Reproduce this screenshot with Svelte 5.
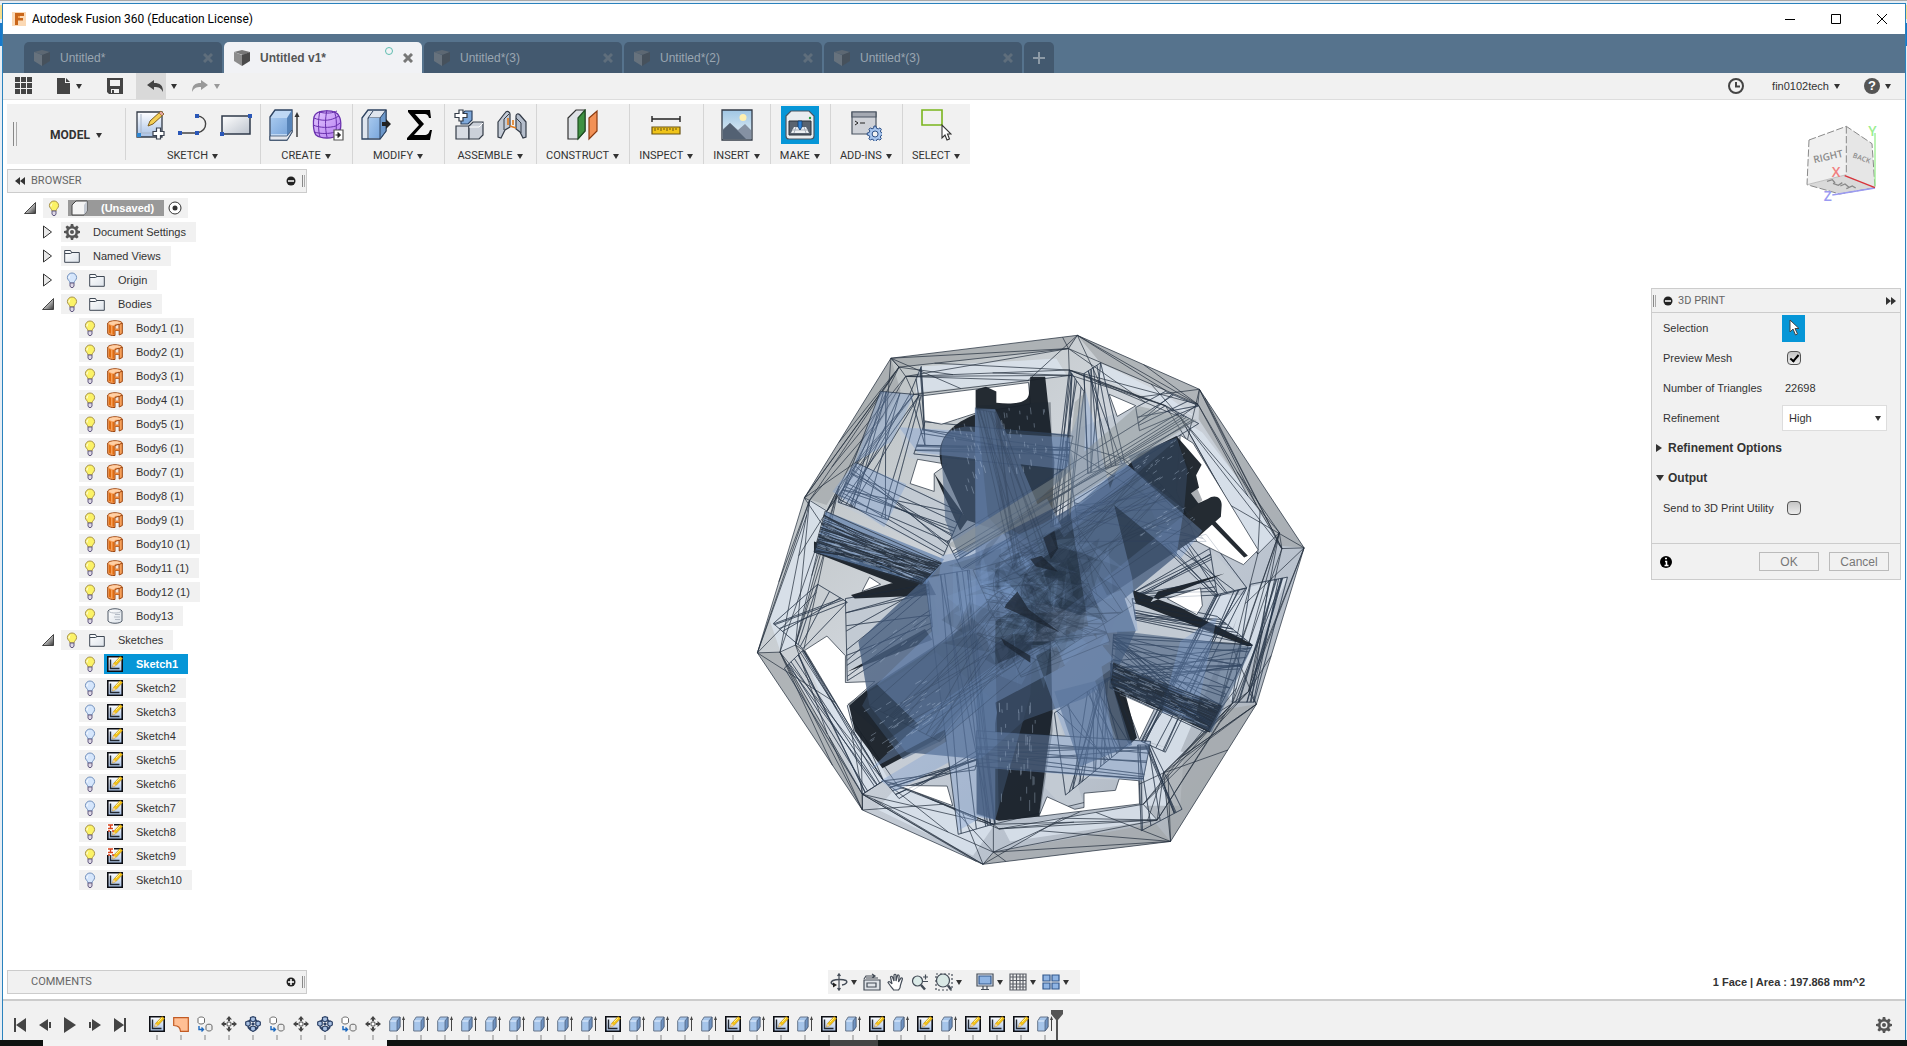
<script>
	const tabs = [
		{ name: 'Untitled*' },
		{ name: 'Untitled v1*', active: true },
		{ name: 'Untitled*(3)' },
		{ name: 'Untitled*(2)' },
		{ name: 'Untitled*(3)' }
	];

	const groups = [
		{ name: 'SKETCH', icons: ['newsketch', 'line', 'rect'] },
		{ name: 'CREATE', icons: ['box', 'form'] },
		{ name: 'MODIFY', icons: ['press', 'sigma'] },
		{ name: 'ASSEMBLE', icons: ['component', 'joint'] },
		{ name: 'CONSTRUCT', icons: ['plane'] },
		{ name: 'INSPECT', icons: ['measure'] },
		{ name: 'INSERT', icons: ['image'] },
		{ name: 'MAKE', icons: ['print'] },
		{ name: 'ADD-INS', icons: ['script'] },
		{ name: 'SELECT', icons: ['select'] }
	];

	const bodies = Array.from({ length: 12 }, (_, i) => ({
		name: `Body${i + 1} (1)`,
		level: 2,
		bulb: 'on',
		icon: 'surface'
	}));

	const sketches = Array.from({ length: 10 }, (_, i) => ({
		name: `Sketch${i + 1}`,
		level: 2,
		bulb: [0, 7, 8].includes(i) ? 'on' : 'off',
		icon: i === 7 || i === 8 ? 'pinned' : 'sketch',
		selected: i === 0
	}));

	const tree = [
		{ name: 'Document Settings', level: 1, arrow: 'closed', icon: 'gear' },
		{ name: 'Named Views', level: 1, arrow: 'closed', icon: 'folder' },
		{ name: 'Origin', level: 1, arrow: 'closed', bulb: 'off', icon: 'folder' },
		{ name: 'Bodies', level: 1, arrow: 'open', bulb: 'on', icon: 'folder' },
		...bodies,
		{ name: 'Body13', level: 2, bulb: 'on', icon: 'solid' },
		{ name: 'Sketches', level: 1, arrow: 'open', bulb: 'on', icon: 'folder' },
		...sketches
	];

	const featureNames = { S: 'sketch', P: 'patch', C: 'copy', M: 'move', R: 'pattern', E: 'extrude' };
	const timeline = [...'SPCMRCMRCMEEEEEEEEESEEEESESESESESESSSE'].map((key) => featureNames[key]);

	const playback = ['first', 'prev', 'play', 'next', 'last'];

	let previewMesh = $state(true);
	let sendToUtility = $state(false);
	let refinement = $state('High');

	// frame rings of the previewed mesh, outermost first
	const rings = [
		[[408, 107], [912, 43], [1242, 194], [1525, 638], [1396, 1076], [1164, 1460], [657, 1524], [331, 1372], [47, 932], [174, 498]],
		[[430, 132], [888, 80], [1238, 236], [1465, 640], [1375, 1040], [1145, 1268], [685, 1490], [331, 1328], [108, 930], [188, 505]],
		[[448, 158], [890, 140], [1190, 272], [1458, 595], [1330, 1075], [1128, 1400], [685, 1412], [388, 1290], [150, 910], [235, 535]],
		[[470, 208], [895, 155], [1150, 240], [1400, 655], [1290, 1100], [1090, 1356], [700, 1425], [424, 1300], [172, 925], [268, 465]]
	];

	let seed = 7;
	const rand = () => {
		seed = (seed * 16807) % 2147483647;
		return seed / 2147483647;
	};

	const mix = (a, b, t) => [Math.round(a[0] + (b[0] - a[0]) * t), Math.round(a[1] + (b[1] - a[1]) * t)];
	const seg = (a, b) => `M${a[0]} ${a[1]}L${b[0]} ${b[1]}`;

	const buildFrame = () => {
		let d = '';
		for (let i = 0; i < 10; i++) {
			const j = (i + 1) % 10;
			for (let r = 0; r < rings.length; r++) {
				d += seg(rings[r][i], rings[r][j]);
				if (r === 0) continue;
				const [a, b, c, e] = [rings[r - 1][i], rings[r - 1][j], rings[r][i], rings[r][j]];
				d += seg(a, c) + seg(r % 2 ? a : c, r % 2 ? e : b);
				d += seg(a, mix(c, e, rand())) + seg(e, mix(a, b, rand()));
			}
			d += seg(rings[0][i], mix(rings[3][i], rings[3][j], 0.2 + rand() * 0.3));
			d += seg(rings[0][j], mix(rings[3][i], rings[3][j], 0.5 + rand() * 0.3));
		}
		return d;
	};

	// lines running from side a-b to side c-d
	const hatch = ([a, b, c, d, count]) => {
		let path = seg(a, c) + seg(b, d) + seg(a, b) + seg(c, d);
		for (let k = 0; k < count; k++) {
			path += seg(mix(a, b, rand()), mix(c, d, rand()));
		}
		return path;
	};

	// short bright dashes along the same direction
	const sparkle = ([a, b, c, d, count]) => {
		let path = '';
		for (let k = 0; k < count; k++) {
			const t = rand();
			const from = rand() * 0.9;
			path += seg(mix(mix(a, b, t), mix(c, d, t), from), mix(mix(a, b, t), mix(c, d, t), from + 0.03 + rand() * 0.07));
		}
		return path;
	};

	const buildShards = (count, size) =>
		Array.from({ length: count }, (_, i) => {
			const angle = rand() * Math.PI * 2;
			const radius = rand() * 190;
			const x = 790 + Math.cos(angle) * radius;
			const y = 790 + Math.sin(angle) * radius;
			const points = [0, 1, 2].map(() => `${Math.round(x + (rand() - 0.5) * size)},${Math.round(y + (rand() - 0.5) * size)}`);
			return { points: points.join(' '), light: i % 2 === 0 };
		});

	const frame = buildFrame();

	const struts = [
		[[1010, 880], [1000, 1030], [1385, 910], [1260, 1155], 34],
		[[500, 285], [470, 375], [900, 325], [880, 420], 8],
		[[640, 1150], [640, 1250], [1110, 1180], [1090, 1285], 10],
		[[315, 400], [265, 500], [600, 540], [550, 660], 10],
		[[1285, 770], [1370, 750], [1085, 1180], [1150, 1210], 8],
		[[1150, 200], [1240, 240], [1070, 245], [1080, 310], 4],
		[[890, 140], [930, 200], [840, 580], [890, 560], 7],
		[[930, 150], [975, 120], [940, 430], [1040, 400], 8],
		[[560, 620], [600, 700], [1150, 240], [1240, 290], 7],
		[[500, 720], [620, 700], [590, 1440], [690, 1410], 8],
		[[1060, 780], [1070, 840], [1290, 830], [1385, 910], 8],
		[[1070, 760], [1080, 780], [1270, 640], [1290, 770], 7],
		[[285, 780], [290, 1010], [510, 740], [520, 860], 9],
		[[850, 1100], [1000, 1000], [880, 1330], [1070, 1170], 18],
		[[380, 200], [490, 210], [265, 510], [400, 560], 10],
		[[490, 130], [460, 205], [495, 210], [500, 350], 3],
		[[880, 340], [920, 620], [1040, 390], [1260, 620], 8],
		[[1140, 630], [1260, 600], [1285, 775], [1370, 750], 6],
		[[210, 740], [290, 790], [90, 850], [170, 920], 6],
		[[170, 925], [120, 975], [388, 1290], [331, 1328], 7],
		[[1380, 740], [1480, 720], [1330, 1070], [1390, 1070], 8],
		[[1075, 1190], [1110, 1190], [1085, 1430], [1195, 1370], 7],
		[[635, 1260], [650, 1200], [390, 1290], [430, 1340], 6]
	].map(hatch);

	const darkStruts = [
		[[230, 535], [200, 650], [545, 680], [490, 740], 46],
		[[1010, 960], [1005, 1020], [1300, 1080], [1265, 1150], 40]
	].map(hatch);

	const glints = [
		[[560, 290], [620, 260], [620, 500], [680, 480], 26],
		[[700, 240], [830, 240], [730, 440], [840, 430], 34],
		[[700, 1060], [800, 1060], [705, 1390], [800, 1390], 40],
		[[1240, 410], [1180, 330], [1120, 500], [1040, 420], 34],
		[[1240, 560], [1200, 500], [1100, 640], [1050, 580], 20],
		[[310, 1110], [380, 1230], [520, 980], [600, 1080], 50],
		[[1010, 960], [1000, 1040], [1300, 1080], [1270, 1150], 90],
		[[220, 560], [200, 640], [540, 680], [490, 740], 90],
		[[530, 780], [530, 850], [320, 940], [420, 980], 16]
	].map(sparkle);

	const core = [
		[[630, 700], [760, 1000], [900, 620], [1000, 900], 20],
		[[640, 880], [900, 560], [820, 960], [1060, 800], 14],
		[[350, 1080], [540, 1180], [700, 760], [860, 900], 18],
		[[700, 660], [860, 820], [1080, 400], [1230, 560], 20],
		[[640, 250], [700, 260], [740, 700], [830, 640], 12]
	].map(hatch);

	const shards = buildShards(110, 190);
</script>

{#snippet cube(shade)}
	<svg class="cube" class:dim={shade} width="18" height="18" viewBox="0 0 18 18">
		<path d="M1 3 9 1l8 2-7 3z" fill="#777" />
		<path d="M1 3l8 3v11l-8-5z" fill="#8c8c8c" />
		<path d="M9 6l8-3v9l-8 5z" fill="#4a4a4a" />
	</svg>
{/snippet}

{#snippet bulb(state)}
	<svg width="12" height="16" viewBox="0 0 12 16">
		<path
			d="M6 1a4.6 4.6 0 0 0-4.6 4.6C1.400 8 3.700 8.600 4 11h4c.3-2.400 2.600-3 2.600-5.400A4.600 4.600 0 0 0 6 1z"
			fill={state === 'on' ? '#fbf266' : '#d5e6fc'}
			stroke={state === 'on' ? '#a8934a' : '#7391bd'}
		/>
		<path d="M4 3.500a3 3 0 0 0-1 3" stroke="#fff" fill="none" />
		<path d="M4 11v3l1 1.500h2L8 14v-3z" fill="#ded8e6" stroke="#625a80" />
	</svg>
{/snippet}

{#snippet small(name)}
	<svg width="16" height="16" viewBox="0 0 16 16">
		{#if name === 'gear'}
			<path
				d="M6.800 0h2.400l.5 2.300 1.300.6 2-1.300 1.700 1.700-1.300 2 .5 1.300 2.100.5v2l-2.200.6-.5 1.300 1.300 2-1.700 1.600-2-1.200-1.300.5L9.100 16H6.900l-.5-2.200-1.300-.5-2 1.300-1.700-1.700 1.300-2-.5-1.300L0 9.100V6.900l2.300-.5.5-1.300-1.300-2 1.700-1.600 2 1.300 1.200-.5z"
				fill="#555"
			/>
			<circle cx="8" cy="8" r="3.500" fill="#f1f1f1" />
			<circle cx="8" cy="8" r="2" fill="#555" />
		{:else if name === 'folder'}
			<path d="M.7 14.300V2.500h5.800l1 2h7.800v9.800z" fill="url(#tint)" stroke="#3f4854" />
			<path d="M1 5.500h5.500l1.500-1" stroke="#3f4854" fill="none" />
		{:else if name === 'surface'}
			<path d="M.7 3C2.500 0 13.500 0 15.300 3v10.500L12.200 15v-4.500H8v5C5 15.800 2 15 .7 13.500z" fill="#f7a05a" stroke="#9c4510" />
			<path d="M2 4.800v8l2 1V5.800zM5.500 6v8.500h1.500V6z" fill="#e06d12" />
			<path d="M1.500 3C4 .8 12 .8 14.500 3L12 4C9 3.200 7 4 7.500 5.300 5 5.300 2.500 4.500 1.500 3z" fill="#ffd0a6" />
			<path d="M8 10.500V5.500l4-1.300v6.300z" fill="#f4e4d8" stroke="#9c4510" />
			<path d="M8 8.500h4v2H8z" fill="#ef8a3d" />
			<path d="M12.200 4.500l3-1.500" stroke="#9c4510" />
		{:else if name === 'solid'}
			<path d="M1 3v10c2 3 12 3 14 0V3C13 0 3 0 1 3z" fill="url(#tint)" stroke="#4f5966" />
			<path d="M2 3.500c2 2 10 2 12 0M8 6.500h5M7 9h6M8 11.500h5" stroke="#b5bcc6" fill="none" />
		{:else if name === 'sketch' || name === 'pinned'}
			<path d="M.8.8h14.400v14.400H.800z" fill="url(#sheet)" stroke="#0c0e14" stroke-width="1.600" />
			<path d="M3.500 3.500v9h9" stroke="#222831" stroke-width="1.400" fill="none" />
			<path d="M5.500 11l1-3.500L13 .6l2.600 2L9 9.500z" fill="#f5c518" stroke="#a87a10" stroke-width=".5" />
			<path d="M5.500 11l1-3.500L9 9.500z" fill="#f2d2a2" />
			<path d="M9 6l4-4" stroke="#fff28a" />
			{#if name === 'pinned'}
				<path d="M0 0h7v7H0z" fill="#fff" />
				<path d="M1 1h5M3.500 1v3M1 4.500h5M1 7h2M5 7h2" stroke="#d8431c" stroke-width="1.400" />
			{/if}
		{:else if name === 'patch'}
			<path d="M.7 1.700h14.600v13.600H7.500C7 11 5.500 10 .7 9.500z" fill="#ffbf94" stroke="#c25a22" stroke-width="1.200" />
		{:else if name === 'copy'}
			<path d="M1 2.500C2 .5 6.500.5 7.500 2.500v4C6 8.500 2 8.500 1 6.500z" fill="#fff" stroke="#666" />
			<path d="M9 9.500c1-1.800 5-1.800 6 0v4c-1 2-5 2-6 0z" fill="#eee" stroke="#666" />
			<path d="M2 10v3.500h4M4.500 11.500l2 2-2 2" stroke="#1b67bd" stroke-width="1.400" fill="none" />
		{:else if name === 'move'}
			<path d="M8 0l3 3.500H5zM8 16l3-3.500H5zM0 8l3.500-3v6zM16 8l-3.500-3v6z" fill="#444" />
			<path d="M8 2v3M8 11v3M2 8h3M11 8h3" stroke="#444" stroke-width="2" />
			<rect x="6" y="6" width="4" height="4" rx="1" fill="#fff" stroke="#444" />
		{:else if name === 'pattern'}
			<path d="M3 11l3 3M13 11l-3 3M3.500 6L6 3.500M12.500 6L10 3.500" stroke="#2c4166" stroke-width="2" />
			<g fill="#a8c0e2" stroke="#2c4166" stroke-width="1.200">
				<path d="M5.500 1.500 8 .7l2.500.8v3L8 6 5.500 4.500zM.7 6l2.500-1 2 1v3l-2 1.500L.7 9zM10.800 6l2.500-1 2 1v3l-2.500 1.500-2-1.500zM5.500 11 8 10l2.500 1v3L8 15.500 5.500 14z" />
			</g>
			<path d="M6.500 7h3v2h-3z" fill="#2c4166" />
		{:else if name === 'extrude'}
			<path d="M.7 5l2.500-4H11v10l-3 4H.7z" fill="#a6c5ea" stroke="#66758a" />
			<path d="M8 15V5l3-4v10z" fill="#6f93c2" stroke="#4b5d77" stroke-width=".7" />
			<path d="M1.300 5h6" stroke="#e8f2ff" />
			<path d="M14.500 15V3" stroke="#444" />
			<path d="M14.500 0l1.500 4h-3z" fill="#444" />
		{/if}
	</svg>
{/snippet}

{#snippet tool(name)}
	<svg width="32" height="32" viewBox="0 0 32 32">
		{#if name === 'newsketch'}
			<path d="M3 3h25v25H3z" fill="url(#sheet)" stroke="#333b47" stroke-width="1.300" />
			<path d="M3 24h4v4H3z" fill="#2e86d1" />
			<path d="M7 5v19h18" stroke="#a9b6c8" fill="none" />
			<path d="M14 17l2-5L27 2l3 3-11 10z" fill="#f4cf55" stroke="#7e5d1c" />
			<path d="M25 4l3 3 2-2-3-3z" fill="#e3a5a0" stroke="#7e5d1c" stroke-width=".6" />
			<path d="M22.500 19h4v3.500H30v4h-3.500V30h-4v-3.500H19v-4h3.500z" fill="#fff" stroke="#3a4250" stroke-width="1.200" />
		{:else if name === 'line'}
			<path d="M3 24h17c12-2 11-17 0-17" fill="none" stroke="#444" stroke-width="1.400" />
			<path d="M1 22h4v4H1zM18 22h4v4h-4zM18 5h4v4h-4z" fill="#2a57b8" />
		{:else if name === 'rect'}
			<path d="M2 7h28v18H2z" fill="url(#paper)" stroke="#2f3a4a" stroke-width="1.500" />
			<path d="M0 23h4v4H0zM28 5h4v4h-4z" fill="#2a57b8" />
		{:else if name === 'box'}
			<path d="M1 8l5-7h17v22l-5 8H1z" fill="#bfd8f4" stroke="#2d4260" stroke-width="1.300" />
			<path d="M2 9h16v16H2z" fill="url(#blue)" />
			<path d="M18 9l5-8v22l-5 8z" fill="#5683b8" />
			<path d="M1 27h17l5-6v2l-5 8H1z" fill="#e3e7ee" stroke="#2d4260" stroke-width=".7" />
			<path d="M28 28V7" stroke="#333" stroke-width="1.400" />
			<path d="M28 3l2.500 5h-5z" fill="#333" />
		{:else if name === 'form'}
			<path d="M2 8c2-8 22-8 25-1 3 5 2 16-1 19-5 4-17 4-22 0C1 22 1 13 2 8z" fill="url(#violet)" stroke="#6a31ae" stroke-width="1.300" />
			<path d="M2 9c7 3 15 3 21 0l4-2M1 16c7 3 16 3 23 1l4-3M2 23c7 2 15 2 21 0l5-3M8 2c-2 8-2 19 0 26M15 1c-2 8-2 19 0 27M22 2c3 6 3 18 1 25M7 3c8 2 14 1 18-1" fill="none" stroke="#6a31ae" />
			<path d="M22 21h9v10h-9z" fill="#fff" stroke="#555" stroke-width="1.200" />
			<path d="M23.500 26h3M26 23.500l2.500 2.500-2.500 2.500z" fill="#222" stroke="#222" />
		{:else if name === 'press'}
			<path d="M1 9l6-8h18v21l-6 8H1z" fill="#dfe5ee" stroke="#2d4260" stroke-width="1.300" />
			<path d="M7 9l5-7M7 30V9h12" stroke="#2d4260" fill="none" />
			<path d="M8 9h11v20H8z" fill="url(#blue)" />
			<path d="M19 9l6-8v21l-6 8z" fill="#6b97ca" stroke="#2d4260" />
			<path d="M21 13h4v-3l5 5-5 5v-3h-4z" fill="#222" />
		{:else if name === 'sigma'}
			<path d="M4 1h22l1 8h-2c-1-4-3-4-6-4h-8l9 10-10 11h10c4 0 5-2 6-5h2l-2 10H3v-2l12-13L4 3z" fill="#000" />
		{:else if name === 'component'}
			<path d="M8 15V6l4-4h7v9l-4 4z" fill="#7ea8da" stroke="#2d4260" stroke-width="1.200" />
			<path d="M3 17h13v13H3z" fill="#d8dce3" stroke="#333b47" stroke-width="1.200" />
			<path d="M16 17l4-4h10v13l-4 4H16z" fill="#cbd0d9" stroke="#333b47" stroke-width="1.200" />
			<path d="M16 18h10l4-4" fill="none" stroke="#fff" />
			<path d="M6 1h4v3.500h4v4h-4V12H6V8.500H2v-4h4z" fill="#fff" stroke="#333b47" stroke-width="1.200" />
		{:else if name === 'joint'}
			<path d="M2 13L9 4c2-3 5-1 5 1v13l-5 3-4 8-3-1z" fill="#c4cbd6" stroke="#333b47" stroke-width="1.200" />
			<path d="M8 21V10l5-5" fill="none" stroke="#333b47" />
			<path d="M30 13L24 6c-2-2-4-1-4 1v13l4 3 3 6 3-1z" fill="#b4bdcb" stroke="#333b47" stroke-width="1.200" />
			<path d="M20 9l5 5v10" fill="none" stroke="#333b47" />
			<path d="M14 17l6 2M12 9v7M17 11v5" stroke="#e07a1c" stroke-width="1.600" fill="none" />
		{:else if name === 'plane'}
			<path d="M1 9l8-8h9v21l-7 8H1z" fill="#dfe2e6" stroke="#333" stroke-width="1.200" />
			<path d="M11 9l7-8v21l-7 8z" fill="#3f9142" stroke="#1e4e22" stroke-width="1.200" />
			<path d="M22 9l8-7v20l-8 8z" fill="#f29156" stroke="#8a3a10" stroke-width="1.200" />
		{:else if name === 'measure'}
			<path d="M2 10h28M2 7v6M30 7v6" stroke="#222" stroke-width="1.400" />
			<path d="M2 18h28v7H2z" fill="#f0c419" stroke="#6b5413" stroke-width="1.200" />
			<path d="M5 19v3M8 19v2M11 19v3M14 19v2M17 19v3M20 19v2M23 19v3M26 19v2" stroke="#6b5413" />
		{:else if name === 'image'}
			<path d="M1 1h30v30H1z" fill="url(#sky)" stroke="#333b47" stroke-width="1.300" />
			<circle cx="22" cy="8.500" r="3.500" fill="#fff0b0" />
			<path d="M2 20l7-6 8 7 7-6 6 6v9H2z" fill="#8591a3" />
			<path d="M2 21l7-7 16 16H2z" fill="#536173" />
		{:else if name === 'print'}
			<path d="M2 7l5-5h18l5 5v20c0 2-1 3-3 3H5c-2 0-3-1-3-3z" fill="#e9ecef" stroke="#4b5562" stroke-width="1.200" />
			<circle cx="26" cy="9" r="1.200" fill="#1d9a3a" />
			<path d="M5 12h22v14H5z" fill="#596370" stroke="#2a323c" />
			<path d="M7 24l3-6h12l3 6z" fill="#eceff3" />
			<path d="M10 24l2-6M22 24l-2-6M8 21h16" stroke="#a5adb8" />
			<path d="M14 12h4v6l-2 3-2-3z" fill="#2d82d8" stroke="#123a66" stroke-width=".8" />
		{:else if name === 'script'}
			<path d="M2 3h24v22H2z" fill="#cfd2d8" stroke="#4b5562" stroke-width="1.200" />
			<path d="M2 3h24v5H2z" fill="#a4a9b2" stroke="#4b5562" stroke-width="1.200" />
			<path d="M5 12l3 2-3 2M10 14h5" stroke="#222" fill="none" />
			<path d="M24 17l2 .2.500 2 1.800.7 1.700-1 1.400 1.400-1 1.700.6 1.500 2 .5v2l-2 .5-.7 1.500 1 1.700-1.400 1.400-1.700-1-1.600.7-.5 2h-2l-.5-2-1.600-.7-1.700 1-1.400-1.400 1-1.700-.7-1.500-2-.5v-2l2-.5.7-1.500-1-1.700 1.400-1.400 1.700 1 1.600-.7z" fill="#a8c6ef" stroke="#2c4f86" />
			<circle cx="25.100" cy="25" r="3" fill="#f1f1f1" stroke="#2c4f86" />
		{:else if name === 'select'}
			<path d="M2 1h20v15H2z" fill="none" stroke="#7ab51d" stroke-width="1.600" />
			<path d="M22 16v13l3-3 2 5 2.500-1-2-5H31z" fill="#fff" stroke="#333" stroke-width="1.100" />
		{/if}
	</svg>
{/snippet}

{#snippet nav(name)}
	<svg width="18" height="18" viewBox="0 0 18 18" fill="none" stroke="#444c57" stroke-width="1.200">
		{#if name === 'orbit'}
			<path d="M9 1v16M7.500 3L9 .800 10.500 3M7.500 15L9 17.200 10.500 15" />
			<path d="M5 12c-4-.5-5-3-2-4.500s10-1.500 13 0c2 1.500 0 4-4 4.500" stroke-width="1.500" />
			<path d="M7 12l-4 2.500V9.500z" fill="#222" stroke="none" />
		{:else if name === 'look'}
			<path d="M1 7h16v10H1zM4 10h9v4H4z" fill="#dfe3e8" />
			<path d="M1 6l2-3h9M9 1l3 2-3 2M3 5h12" />
		{:else if name === 'pan'}
			<path d="M6 16C4 14 2 11 1 9.500 1.500 8 3 8.500 5 11L3.500 4C4 3 5 3 5.500 4L7 8V2c.5-1 1.500-1 2 0v6l1.500-5.500c.5-1 1.500-.5 1.700.5L11.500 9l2.500-4c.8-.5 1.600 0 1.400 1L13.500 12c0 2-1 4-2 5H6.500z" fill="#fff" />
		{:else if name === 'zoom'}
			<circle cx="6.500" cy="8" r="5" fill="#dcebe8" />
			<path d="M10 12l4 4.500" stroke-width="2.500" />
			<path d="M12 4h5M14.500 1.500v5M12 8.500h5" />
		{:else if name === 'fit'}
			<path d="M1 17V1h16v16z" stroke-dasharray="2 2" />
			<circle cx="8" cy="7.500" r="6.500" fill="#d9e8e5" />
			<path d="M13 12.500l3 4" stroke-width="2.500" />
		{:else if name === 'display'}
			<path d="M1 1h16v12H1z" fill="#e8edf5" />
			<path d="M3 3h12v8H3z" fill="#8fb4e3" stroke="#33588c" />
			<path d="M7 13v3M11 13v3M5 16.500h8" />
		{:else if name === 'grid'}
			<path d="M1 1h16v16H1zM4 1v16M7.500 1v16M11 1v16M14 1v16M1 4h16M1 7.500h16M1 11h16M1 14h16" stroke="#5c6068" />
		{:else if name === 'views'}
			<path d="M1 2h7v6H1zM10 2h7v6h-7zM1 10h7v6H1zM10 10h7v6h-7z" fill="#8fb4e3" stroke="#33588c" />
		{/if}
	</svg>
{/snippet}

<svg class="defs" width="0" height="0" aria-hidden="true">
	<defs>
		<linearGradient id="paper" x1="0" y1="0" x2="1" y2="1">
			<stop offset="0" stop-color="#fff" />
			<stop offset="1" stop-color="#bcc3cd" />
		</linearGradient>
		<linearGradient id="tint" x1="0" y1="0" x2="1" y2="1">
			<stop offset="0" stop-color="#fff" />
			<stop offset="1" stop-color="#dde3ea" />
		</linearGradient>
		<linearGradient id="sheet" x1="0" y1="0" x2="0" y2="1">
			<stop offset="0" stop-color="#fff" />
			<stop offset="1" stop-color="#a8c1e6" />
		</linearGradient>
		<linearGradient id="blue" x1="0" y1="0" x2="1" y2="1">
			<stop offset="0" stop-color="#a6c8ee" />
			<stop offset="1" stop-color="#7ba7dc" />
		</linearGradient>
		<linearGradient id="violet" x1="0" y1="0" x2="1" y2="1">
			<stop offset="0" stop-color="#e3c8ff" />
			<stop offset="1" stop-color="#b57cf0" />
		</linearGradient>
		<linearGradient id="sky" x1="0" y1="0" x2="0" y2="1">
			<stop offset="0" stop-color="#9fc6e4" />
			<stop offset="1" stop-color="#e8f2f8" />
		</linearGradient>
		<linearGradient id="metal" x1="0" y1="0" x2="1" y2="1">
			<stop offset="0" stop-color="#b4bab9" />
			<stop offset=".4" stop-color="#d0d5db" />
			<stop offset=".7" stop-color="#b9c2ce" />
			<stop offset="1" stop-color="#a5a9ac" />
		</linearGradient>
		<linearGradient id="corner" x1="0" y1="0" x2="1" y2="1">
			<stop offset=".3" stop-color="#eee" />
			<stop offset="1" stop-color="#333" />
		</linearGradient>
	</defs>
</svg>

<div class="desktop">
	<div class="window">
		<header class="titlebar">
			<svg width="16" height="16" viewBox="0 0 16 16">
				<path d="M1 1h14v14H1z" fill="#fbd9b5" />
				<path d="M4 2h9v3H7v2h5v2.500H7V14H4z" fill="#c9661a" />
				<path d="M7 5h2v2H7z" fill="#f6a04d" />
			</svg>
			<span class="title">Autodesk Fusion 360 (Education License)</span>
			<button aria-label="Minimize"><svg width="12" height="12"><path d="M1 6.500h10" stroke="#000" /></svg></button>
			<button aria-label="Maximize"><svg width="12" height="12"><path d="M1.500 1.500h9v9h-9z" stroke="#000" fill="none" /></svg></button>
			<button aria-label="Close"><svg width="12" height="12"><path d="M1 1l10 10M11 1L1 11" stroke="#000" /></svg></button>
		</header>

		<nav class="tabs">
			{#each tabs as tab}
				<div class="tab" class:active={tab.active}>
					{@render cube(!tab.active)}
					<a href="#doc">{tab.name}</a>
					{#if tab.active}<i class="ring"></i>{/if}
					<button aria-label="Close tab">
						<svg width="10" height="10"><path d="M1 1l8 8M9 1L1 9" stroke="currentColor" stroke-width="3" /></svg>
					</button>
				</div>
			{/each}
			<button class="add" aria-label="New tab">
				<svg width="12" height="12"><path d="M6 0v12M0 6h12" stroke="#8d9aa6" stroke-width="2" /></svg>
			</button>
		</nav>

		<div class="quickbar">
			<button aria-label="Data panel">
				<svg width="18" height="18" fill="#444"><path d="M0 0h5v5H0zM6 0h5v5H6zM12 0h5v5h-5zM0 6h5v5H0zM6 6h5v5H6zM12 6h5v5h-5zM0 12h5v5H0zM6 12h5v5H6zM12 12h5v5h-5z" /></svg>
			</button>
			<button class="file" aria-label="File">
				<svg width="14" height="16" fill="#444"><path d="M0 0h8v5h5v11H0zM9 0l4 4H9z" /></svg>
				<i class="caret"></i>
			</button>
			<button class="save" aria-label="Save">
				<svg width="16" height="16"><path d="M0 0h16v16H2l-2-2z" fill="#444" /><path d="M3 2h10v6H3zM4 11h8v4H4z" fill="#f1f1f1" /><path d="M5 12h2v3H5z" fill="#444" /></svg>
			</button>
			<button class="undo" aria-label="Undo">
				<svg width="17" height="12" fill="#444"><path d="M0 5l7-5v3c6 0 9 2 9 9-2-4-4-5-9-5v3z" /></svg>
			</button>
			<i class="caret"></i>
			<button class="redo" aria-label="Redo">
				<svg width="17" height="12" fill="#999"><path d="M16 5L9 0v3c-6 0-9 2-9 9 2-4 4-5 9-5v3z" /></svg>
			</button>
			<i class="caret pale"></i>
			<span class="grow"></span>
			<button aria-label="Job status">
				<svg width="16" height="16" fill="none" stroke="#444" stroke-width="2"><circle cx="8" cy="8" r="7" /><path d="M8 4v4.500h4" /></svg>
			</button>
			<button class="user">fin0102tech <i class="caret"></i></button>
			<button class="help" aria-label="Help"><b>?</b> <i class="caret"></i></button>
		</div>

		<main class="workspace">
			<svg class="mesh" viewBox="0 0 1568 1568" preserveAspectRatio="none" aria-label="Mesh preview">
				<path d="M408 107 912 43l330 151 283 444-129 438-232 384-507 64-326-152L47 932l127-434z" fill="url(#metal)" />
				<g fill="#dbe3ee" opacity=".8">
					<path d="M190 505l50 30-35 150-50 225-45 20-30-90zM485 130l370-22 30 50-410 45zM975 120l175 90 80 60-260-110zM1190 275l60 40 210 280-60 60zM1370 750l110-30-150 350-40-60zM1285 770l85 0-180 440-100-35zM170 930l60 30 170 325-70 40zM430 1300l260 110-60 90-260-130zM1090 1180l110 30-10 150-100 0zM1130 1400l-400 60-20-40 380-65z" />
				</g>
				<g fill="#a3a7aa" opacity=".7">
					<path d="M408 107L174 498l60 20 200-320zM408 107L912 43l-22 37-460 52zM912 43l330 151-4 42-262-114zM1242 194l283 444-60-5-225-355zM1396 1076l-232 384-20-190 170-180zM657 1524l507-64-40-50-440 80zM47 932l284 440v-45L110 930z" />
				</g>
				<g fill="#c2cad3">
					<path d="M425 300l450 20 180-75 180 40-330 250-40-80-410-70zM315 400l300 140-60 120-300-150zM290 780l230-40 20 140-250 100zM1060 740l220-90 90 100-90 20-40 70 140 80-30 40-350-90z" />
					<path d="M640 1150l470 30-20 110-460-20zM850 1080l80 280-60 0-45-50z" />
				</g>

				<g class="wire">
					<path d={frame} />
					{#each struts as d}<path {d} />{/each}
				</g>

				<g fill="#fff" stroke="#26323f" stroke-width="2">
					<path d="M495 212l285-37 5 60-145 25-95 32-47-10zM998 208l72 32-50 30zM480 390l80 14-35 26v50l-65-22z" />
					<path d="M1190 322l35 23 176 299-40 41-126-65-55-140zM1155 780l90-30 5 50-15 25zM1035 1050l85 40-40 85zM425 1303l135 2 15 55z" />
					<path d="M830 1335l75 35 25-5v-40l85-8 10-32 53 5 2 65-272 35zM175 925l60-40 50 55v75l80-3-75 68 20 80zM350 720l30 20-50 20z" />
				</g>

				<g fill="#171e26" opacity=".94">
					<path d="M637 195l28-8 28 13v32c50 5 85 0 88-25l4-48h40l25 240-10 240-230-80-65-150c-20-70 20-115 92-145z" />
					<path d="M1180 325l68 80-15 30 8 35-22 15 20 28 25-12c20-15 40-5 38 20l-2 30-60 55-190 130-130 90-270-90 370-300 60-60z" />
					<path d="M1283 562l90 98-10 5-90-95zM640 1000l50-100h150l5 200-37 290-108 12-60-20zM295 1080l55-50 270-180 70 130-150 190-155 85-75-105z" />
					<path d="M200 620l180 60 110 60-20 20-270-110zM1000 960l305 120-35 75-265-125zM1000 1000l30 0 43 170-20 20zM300 770l200-60 30 60-220 10z" />
					<path d="M525 430l90 130-20 30zM1060 755l130 50 190 100 5 8-15 0-300-120zM1110 790l200-80-180 50zM290 985l230-90-20-30z" />
				</g>

				<g fill="#485f7f">
					<path d="M545 680l75-20 200-90 100-60 120-110 160 130-20 130-140 120 30 90-60 130-80 60-160 60-120 110-200-20-100-130-30-180z" opacity=".8" />
					<path d="M545 380c-5-60 30-90 100-80l240 20 20 90-180 170-130 90-40-110z" opacity=".6" />
					<path d="M635 245l55 5 15 320 100 60-20 420-95 350-50-15z" opacity=".65" />
					<path d="M1020 870l365 45-110 240-270-130z" opacity=".6" />
					<path d="M850 1040l150-40 60 190-140 60z" opacity=".7" />
					<path d="M1050 380l130-50 30 90-10 120-60 60zM350 1040l180-110 150 130-140 120-100 50-110-150z" opacity=".6" />
				</g>
				<path d="M232 535l320 135-50 70-300-90z" fill="#5f7fab" opacity=".7" />

				<g fill="#1c2631" opacity=".36">
					<path d="M1180 335l70 170-520 430-330 240-110-100 270-180 440-400z" />
					<path d="M690 900h150l5 250-35 240-110 10zM640 240l200-10 10 360-60 100-120-140z" />
					<path d="M790 580l70 0 50 90-60 50-80-70zM960 1010l40-30 60 190-30 40z" />
				</g>

				<g fill="#7f9fd0" opacity=".38">
					<path d="M500 725l120-25 75 400-55 300-50 30z" />
					<path d="M895 320l40-120 125 520 15 150-130 10-50-330z" />
					<path d="M690 250l55 120 110 270-80 60-90-200zM640 400l50-80 40 240-80 100z" />
					<path d="M560 670l270-170 40 80-150 90-100 50zM550 850l220-140-30 100-190 130z" />
					<path d="M1030 390l220 200-60 80-200-170zM370 1020l150-150 180 110-180 190z" />
					<path d="M430 300l470 30-10 90-410-50zM640 1150l470 30-20 110-470-40z" />
					<path d="M350 1260l650-360-20-60-350 150zM800 940l160-80 60 380-110 10zM250 480l60-80 140 60-60 120z" />
					<path d="M380 200l90 10-60 130-100 60zM1190 900l100-70-60 290-90-20zM380 1290l260-160 10 60-230 130z" />
					<path d="M545 660l90-20 60 120-60 130-110-60zM850 900l90-40 70 90-110 70z" />
					<path d="M635 250l55 0 0 1150-50-10z" />
				</g>

				<g fill="#8e9495" opacity=".45">
					<path d="M560 630l290-190 225-200 160 40-300 200-320 170zM885 430l20-200 30-30-5 220-40 130z" />
				</g>

				{#each shards as shard}
					<polygon points={shard.points} fill={shard.light ? '#86a5d4' : '#1d2937'} opacity=".15" />
				{/each}
				<g fill="#1b232e" opacity=".75">
					<path d="M820 610l30-20 10 50-20 30zM785 670l30-10 45 45-60-15zM720 795l30-35 30 50 85 65-150-70zM705 890l80 50v20l-70-50z" />
				</g>
				<g fill="none" stroke="#26364a" stroke-width="2" opacity=".4">
					<ellipse cx="780" cy="740" rx="95" ry="90" />
					<ellipse cx="790" cy="800" rx="120" ry="60" />
					<ellipse cx="820" cy="780" rx="60" ry="110" />
					{#each core as d}<path {d} />{/each}
				</g>
				<g class="wire">
					{#each darkStruts as d}<path {d} />{/each}
				</g>
				<g class="glint">
					{#each glints as d}<path {d} />{/each}
				</g>
				<g class="wire faint">
					{#each struts as d}<path {d} />{/each}
				</g>
			</svg>

			<svg class="viewcube" width="80" height="90" viewBox="0 0 240 270">
				<path d="M18 66L130 25v145L12 200z" fill="#f0f0f0" />
				<path d="M130 25l77 52 9 132-86-39z" fill="#e6e6e6" />
				<path d="M12 200l118-30 86 39-106 19z" fill="#d9d9d9" />
				<path d="M18 66L130 25l77 52 9 132-106 19-98-28zM130 25v145" fill="none" stroke="#8a8a8a" stroke-width="3" stroke-dasharray="22 7" />
				<path d="M12 200l118-30" stroke="#aaa" stroke-width="2" />
				<g font-family="Open Sans, sans-serif" font-weight="600" fill="#8b8b8b">
					<text x="34" y="136" font-size="30" transform="rotate(-13 34 136)">RIGHT</text>
					<text x="148" y="118" font-size="21" transform="rotate(20 148 118)">BACK</text>
				</g>
				<path d="M72 190l16-5 8 10M90 196l16 6 12-8M112 204l14-6 12 10M130 212l18-8 10 6" stroke="#888" stroke-width="4" fill="none" />
				<path d="M216 205V45" stroke="#9bee8f" stroke-width="4" />
				<path d="M216 210L88 231" stroke="#9a9af2" stroke-width="5" />
				<path d="M216 209L125 173" stroke="#d8333b" stroke-width="4" />
				<g font-family="Open Sans, sans-serif" font-size="42" font-weight="600">
					<text x="196" y="54" fill="#9bee8f">Y</text>
					<text x="86" y="178" fill="#f28080">X</text>
					<text x="62" y="250" fill="#9a9af2">Z</text>
				</g>
			</svg>

			<div class="ribbon">
				<i class="grip"></i>
				<button class="model">MODEL <i class="caret"></i></button>
				{#each groups as group}
					<div class="group">
						<div class="icons">
							{#each group.icons as name}
								<button class="tool" class:on={name === 'print'} aria-label={name}>{@render tool(name)}</button>
							{/each}
						</div>
						<button class="label">{group.name} <i class="caret"></i></button>
					</div>
				{/each}
			</div>

			<div class="middle">
				<section class="browser">
					<div class="bar">
						<svg width="10" height="8" fill="#333"><path d="M5 0v8L0 4zM10 0v8L5 4z" /></svg>
						<h2>BROWSER</h2>
						<svg width="10" height="10"><circle cx="5" cy="5" r="4.500" fill="#222" /><path d="M2 5h6" stroke="#fff" stroke-width="1.500" /></svg>
						<i class="grip"></i>
					</div>
					<ul>
						<li class="root">
							<svg class="arrow" width="12" height="12"><path d="M11.500.500v11H.500z" fill="url(#corner)" stroke="#444" /></svg>
							<div class="chip">
								{@render bulb('on')}
								<span class="name">
									<svg width="17" height="16" viewBox="0 0 17 16"><path d="M1 5l4-4h11v10l-3 4H1z" fill="#f4f4f4" stroke="#444" /><path d="M13 15V5l3-4v10z" fill="#c5cad2" /></svg>
									<b>(Unsaved)</b>
								</span>
								<svg width="14" height="14"><circle cx="7" cy="7" r="6" fill="#fff" stroke="#333" /><circle cx="7" cy="7" r="2.500" fill="#333" /></svg>
							</div>
						</li>
						{#each tree as item}
							<li class="level{item.level}">
								{#if item.arrow === 'closed'}
									<svg class="arrow" width="12" height="14"><path d="M1.500 1v12l8-6z" fill="#e8e8e8" stroke="#333" /></svg>
								{:else if item.arrow === 'open'}
									<svg class="arrow" width="12" height="14"><path d="M11.500 1.500v11H.500z" fill="url(#corner)" stroke="#444" /></svg>
								{/if}
								<div class="chip" class:plain={!item.bulb} class:chosen={item.selected}>
									{#if item.bulb}{@render bulb(item.bulb)}{/if}
									<span class="name">
										{@render small(item.icon)}
										<span>{item.name}</span>
									</span>
								</div>
							</li>
						{/each}
					</ul>
				</section>

				<form class="print">
					<div class="bar">
						<i class="grip"></i>
						<svg width="10" height="10"><circle cx="5" cy="5" r="4.500" fill="#222" /><path d="M2 5h6" stroke="#fff" stroke-width="1.500" /></svg>
						<h2>3D PRINT</h2>
						<svg width="10" height="8" fill="#333"><path d="M0 0v8l5-4zM5 0v8l5-4z" /></svg>
					</div>
					<div class="fields">
						<div class="field">
							<label for="pick">Selection</label>
							<button type="button" id="pick" class="pick" aria-label="Selection">
								<svg width="12" height="18"><path d="M2 1v12l3-3 2.500 6 2-1L7 9.500h4z" fill="#fff" stroke="#444" /></svg>
							</button>
						</div>
						<div class="field">
							<label for="preview">Preview Mesh</label>
							<input type="checkbox" id="preview" bind:checked={previewMesh} />
						</div>
						<div class="field">
							<span>Number of Triangles</span>
							<output>22698</output>
						</div>
						<div class="field">
							<label for="refine">Refinement</label>
							<div class="drop">
								<select id="refine" bind:value={refinement}>
									<option>High</option>
									<option>Medium</option>
									<option>Low</option>
								</select>
								<i class="caret"></i>
							</div>
						</div>
						<button type="button" class="fold"><i class="tri"></i>Refinement Options</button>
						<button type="button" class="fold"><i class="tri open"></i>Output</button>
						<div class="field">
							<label for="send">Send to 3D Print Utility</label>
							<input type="checkbox" id="send" bind:checked={sendToUtility} />
						</div>
					</div>
					<div class="actions">
						<svg width="12" height="12"><circle cx="6" cy="6" r="6" /><path d="M5 5.500h1.500V9M4.500 9.500h4M5 2.500h2" stroke="#fff" stroke-width="1.500" fill="none" /></svg>
						<button type="button">OK</button>
						<button type="button">Cancel</button>
					</div>
				</form>
			</div>

			<div class="bottom">
				<div class="bar comments">
					<h2>COMMENTS</h2>
					<svg width="10" height="10"><circle cx="5" cy="5" r="4.500" fill="#222" /><path d="M2 5h6M5 2v6" stroke="#fff" stroke-width="1.500" /></svg>
					<i class="grip"></i>
				</div>
				<div class="navbar">
					<button aria-label="Orbit">{@render nav('orbit')}<i class="caret"></i></button>
					<button aria-label="Look at">{@render nav('look')}</button>
					<button aria-label="Pan">{@render nav('pan')}</button>
					<button aria-label="Zoom">{@render nav('zoom')}</button>
					<button class="fit" aria-label="Fit">{@render nav('fit')}<i class="caret"></i></button>
					<button aria-label="Display settings">{@render nav('display')}<i class="caret"></i></button>
					<button aria-label="Grid and snaps">{@render nav('grid')}<i class="caret"></i></button>
					<button aria-label="Viewports">{@render nav('views')}<i class="caret"></i></button>
				</div>
				<p class="status">1 Face | Area : 197.868 mm^2</p>
			</div>
		</main>

		<footer class="timeline">
			<div class="playback">
				{#each playback as name}
					<button aria-label={name}>
						<svg width="14" height="16" fill="#444">
							{#if name === 'first'}<path d="M1 1h2v14H1zM13 1v14L3 8z" />
							{:else if name === 'prev'}<path d="M10 2v12L1 8zM11 5h2v6h-2z" />
							{:else if name === 'play'}<path d="M1 0l12 8-12 8z" />
							{:else if name === 'next'}<path d="M4 2v12l9-6zM1 5h2v6H1z" />
							{:else}<path d="M11 1h2v14h-2zM1 1v14l10-7z" />{/if}
						</svg>
					</button>
				{/each}
			</div>
			<ol>
				{#each timeline as feature}
					<li>{@render small(feature)}</li>
				{/each}
			</ol>
			<svg class="marker" width="12" height="30" fill="#555"><path d="M0 0h12v4L7 10v20H5V10L0 4z" /></svg>
			<button class="settings" aria-label="Timeline settings">{@render small('gear')}</button>
		</footer>
	</div>
	<div class="taskbar"><i class="search"></i><i class="task"></i></div>
</div>

<style>
	:global(body) {
		margin: 0;
		background: #fff;
	}

	.desktop {
		display: flex;
		flex-direction: column;
		height: 100vh;
		overflow: hidden;
		font: 11px/16px "Liberation Sans", Arial, sans-serif;
		color: #333;
		background: linear-gradient(#aaa 1px, #e6edf4 1px, #e6edf4 5px, #f5dd8c 5px, #f5dd8c 19px, #e6edf4 19px, #e6edf4 23px, #1979ca 23px, #1979ca 46px, #e6edf4 46px);
	}

	.defs {
		position: absolute;
	}

	button {
		display: flex;
		align-items: center;
		justify-content: center;
		padding: 0;
		border: 0;
		background: none;
		font: inherit;
		color: inherit;
	}

	svg {
		flex: none;
	}

	h2 {
		flex: 1;
		margin: 0;
		font: 11px/16px Roboto, sans-serif;
		color: #666;
	}

	.window {
		flex: 1;
		min-height: 0;
		display: flex;
		flex-direction: column;
		margin: 3px 1px 0 2px;
		border: 1px solid #2a82bd;
		border-bottom: 0;
		background: #fff;
	}

	.caret {
		width: 0;
		margin-left: 6px;
		border: 3px solid transparent;
		border-top: 5px solid #333;
		border-bottom: 0;
	}

	.pale {
		border-top-color: #999;
	}

	.grip {
		width: 1px;
		height: 12px;
		border-left: 1px solid #888;
		border-right: 1px solid #aaa;
	}

	/* title bar and tabs */
	.titlebar {
		display: flex;
		align-items: center;
		height: 30px;
		padding-left: 8px;
		font: 12px/16px Roboto, "Segoe UI", sans-serif;
		color: #000;
	}

	.title {
		flex: 1;
		margin-left: 5px;
	}

	.titlebar button {
		width: 46px;
		height: 30px;
	}

	.tabs {
		display: flex;
		gap: 2px;
		padding: 8px 21px 0;
		background: #56738d;
	}

	.tab {
		display: flex;
		align-items: center;
		width: 198px;
		height: 31px;
		box-sizing: border-box;
		padding: 0 9px;
		border-radius: 5px 5px 0 0;
		background: #43596f;
		font-size: 12px;
		color: #5f6e7c;
	}

	.tab a {
		flex: 1;
		margin-left: 9px;
		color: #9aa6b1;
		text-decoration: none;
	}

	.tab.active {
		background: #f1f2f5;
		color: #777;
	}

	.tab.active a {
		font-weight: bold;
		color: #555;
	}

	.dim {
		opacity: 0.5;
	}

	.ring {
		width: 6px;
		height: 6px;
		margin: 0 10px 14px 0;
		border: 1px solid #5fbdb0;
		border-radius: 50%;
	}

	.add {
		width: 30px;
		height: 31px;
		border-radius: 5px 5px 0 0;
		background: #43596f;
	}

	.quickbar {
		display: flex;
		align-items: center;
		height: 26px;
		padding: 0 14px 0 12px;
		border-bottom: 1px solid #ddd;
		background: #f1f1f1;
	}

	.quickbar .caret {
		margin-left: 5px;
	}

	.file {
		margin-left: 24px;
	}

	.save {
		margin-left: 25px;
	}

	.undo {
		width: 30px;
		height: 26px;
		margin-left: 13px;
		padding-left: 8px;
		background: #d9d9d9;
	}

	.redo {
		margin-left: 15px;
	}

	.grow {
		flex: 1;
	}

	.user {
		margin: 0 24px 0 28px;
	}

	.help b {
		width: 16px;
		height: 16px;
		border-radius: 50%;
		background: #555;
		font-size: 13px;
		color: #fff;
	}

	/* canvas */
	.workspace {
		position: relative;
		flex: 1;
		min-height: 0;
		display: flex;
		flex-direction: column;
		padding: 4px 4px 5px;
	}

	.mesh {
		position: absolute;
		left: 737px;
		top: 220px;
		width: 580px;
		height: 560px;
	}

	.wire {
		fill: none;
		stroke: #26323f;
		stroke-width: 2;
	}

	.faint {
		stroke: #2b4263;
		opacity: 0.3;
	}

	.glint {
		fill: none;
		stroke: #b9cbe0;
		stroke-width: 2;
		opacity: 0.5;
	}

	.viewcube {
		position: absolute;
		top: 18px;
		right: 22px;
	}

	/* ribbon */
	.ribbon {
		position: relative;
		align-self: flex-start;
		display: flex;
		align-items: center;
		height: 60px;
		padding: 0 0 0 6px;
		background: #f1f1f1;
	}

	.ribbon > .grip {
		width: 2px;
		height: 24px;
	}

	.model {
		box-sizing: border-box;
		width: 109px;
		height: 52px;
		padding: 2px 0 0 10px;
		border-right: 1px solid #d5d5d5;
		font: bold 12px/16px Roboto, sans-serif;
	}

	.group {
		box-sizing: border-box;
		display: flex;
		flex-direction: column;
		align-items: center;
		height: 60px;
		padding: 2px 3px 0 2px;
		border-right: 1px solid #d5d5d5;
	}

	.group:last-child {
		border-right: 0;
	}

	.icons {
		display: flex;
	}

	.tool {
		width: 43px;
		height: 38px;
	}

	.tool.on {
		width: 38px;
		background: #0696d7;
	}

	.label {
		flex: none;
		height: 16px;
		margin-top: 4px;
		padding: 0 7px;
		font: 11px/16px Roboto, sans-serif;
		white-space: nowrap;
	}

	.label .caret {
		margin-left: 4px;
	}

	/* panels */
	.middle {
		position: relative;
		flex: 1;
		min-height: 0;
		display: flex;
		justify-content: space-between;
		align-items: flex-start;
		margin-top: 5px;
	}

	.bar {
		display: flex;
		align-items: center;
		gap: 6px;
		height: 22px;
		border: 1px solid #ccc;
		background: #f1f1f1;
	}

	.browser .bar,
	.comments {
		width: 290px;
		padding: 0 1px 0 7px;
	}

	.comments {
		box-sizing: border-box;
		width: 300px;
		height: 24px;
		padding-left: 23px;
	}

	ul,
	ol {
		margin: 0;
		padding: 0;
		list-style: none;
	}

	.browser ul {
		padding-top: 3px;
	}

	.browser li {
		position: relative;
		display: flex;
		align-items: center;
		height: 24px;
	}

	.arrow {
		width: 12px;
		margin-right: 7px;
	}

	.root {
		padding-left: 17px;
	}

	.level1 {
		padding-left: 35px;
	}

	.level2 {
		padding-left: 72px;
	}

	.chip {
		display: flex;
		align-items: center;
		gap: 8px;
		height: 20px;
		padding-left: 5px;
		background: #f1f1f1;
	}

	.chip.plain {
		padding-left: 0;
	}

	.root .chip {
		padding-right: 6px;
		gap: 4px;
	}

	.root .name {
		gap: 13px;
		height: 16px;
		margin-left: 4px;
		background: #999;
		color: #fff;
	}

	.name {
		display: flex;
		align-items: center;
		gap: 13px;
		height: 20px;
		padding: 0 10px 0 3px;
	}

	.chosen .name {
		background: #0696d7;
		font-weight: bold;
		color: #fff;
	}

	.print {
		width: 248px;
		margin-top: 119px;
		border: 1px solid #ccc;
		background: #f1f1f1;
	}

	.print .bar {
		gap: 5px;
		height: 23px;
		padding: 0 4px 0 1px;
		border: 0;
		border-bottom: 1px solid #ccc;
	}

	.print .bar .grip {
		margin-right: 2px;
	}

	.fields {
		padding: 0 13px 20px 11px;
	}

	.field {
		display: grid;
		grid-template-columns: 119px 1fr;
		align-items: center;
		height: 30px;
	}

	.field label,
	.field > span {
		white-space: nowrap;
	}

	.pick {
		width: 23px;
		height: 27px;
		background: #0696d7;
	}

	output {
		padding-left: 3px;
	}

	input {
		appearance: none;
		position: relative;
		width: 14px;
		height: 14px;
		margin: 0 0 0 5px;
		border: 1px solid #555;
		border-radius: 4px;
		background: linear-gradient(#c4c4c4, #ececec);
	}

	input:checked::after {
		content: "";
		position: absolute;
		left: 4px;
		top: 1px;
		width: 3px;
		height: 7px;
		border: solid #000;
		border-width: 0 2px 2px 0;
		rotate: 40deg;
	}

	.drop {
		display: flex;
		align-items: center;
		height: 24px;
		border: 1px solid #ddd;
		background: #fff;
	}

	select {
		appearance: none;
		flex: 1;
		padding: 0 6px;
		border: 0;
		background: none;
		font: inherit;
		color: inherit;
	}

	.drop .caret {
		margin-right: 5px;
	}

	.fold {
		height: 30px;
		margin-left: -7px;
		font-weight: bold;
		font-size: 12px;
	}

	.tri {
		width: 0;
		margin-right: 6px;
		border: 4px solid transparent;
		border-left: 6px solid #333;
		border-right: 0;
	}

	.tri.open {
		margin-right: 4px;
		border: 4px solid transparent;
		border-top: 6px solid #333;
		border-bottom: 0;
	}

	.actions {
		display: flex;
		align-items: center;
		gap: 10px;
		height: 35px;
		padding: 0 11px 0 8px;
		border-top: 1px solid #ccc;
	}

	.actions svg {
		margin-right: auto;
	}

	.actions button {
		width: 60px;
		height: 19px;
		border: 1px solid #bbb;
		font-size: 12px;
		color: #777;
	}

	.bottom {
		position: relative;
		display: grid;
		grid-template-columns: 1fr auto 1fr;
		align-items: center;
	}

	.navbar {
		display: flex;
		align-items: center;
		gap: 6px;
		height: 24px;
		padding: 0 11px 0 2px;
		background: #f1f1f1;
	}

	.navbar .caret {
		margin-left: 3px;
	}

	.fit {
		margin-right: 8px;
	}

	.status {
		justify-self: end;
		margin: 0 36px 0 0;
		font-weight: bold;
		font-size: 11px;
	}

	/* timeline */
	.timeline {
		display: flex;
		align-items: center;
		height: 39px;
		padding: 0 13px 0 10px;
		border-top: 2px solid #ccc;
		background: #f1f1f1;
	}

	.playback {
		display: flex;
		gap: 11px;
		margin: 8px 18px 0 0;
	}

	ol {
		display: flex;
		align-self: flex-end;
	}

	ol li {
		display: flex;
		flex-direction: column;
		align-items: center;
		width: 24px;
	}

	ol li::after {
		content: "";
		width: 2px;
		height: 5px;
		margin-top: 3px;
		background: #bbb;
	}

	.marker {
		align-self: flex-end;
		margin-left: -6px;
	}

	.settings {
		margin: 8px 0 0 auto;
	}

	.taskbar {
		display: flex;
		height: 6px;
		background: #0f1311;
	}

	.search {
		width: 344px;
		margin-left: 43px;
		background: #f3f3f3;
	}

	.task {
		width: 48px;
		margin-left: 443px;
		background: #444;
	}
</style>
